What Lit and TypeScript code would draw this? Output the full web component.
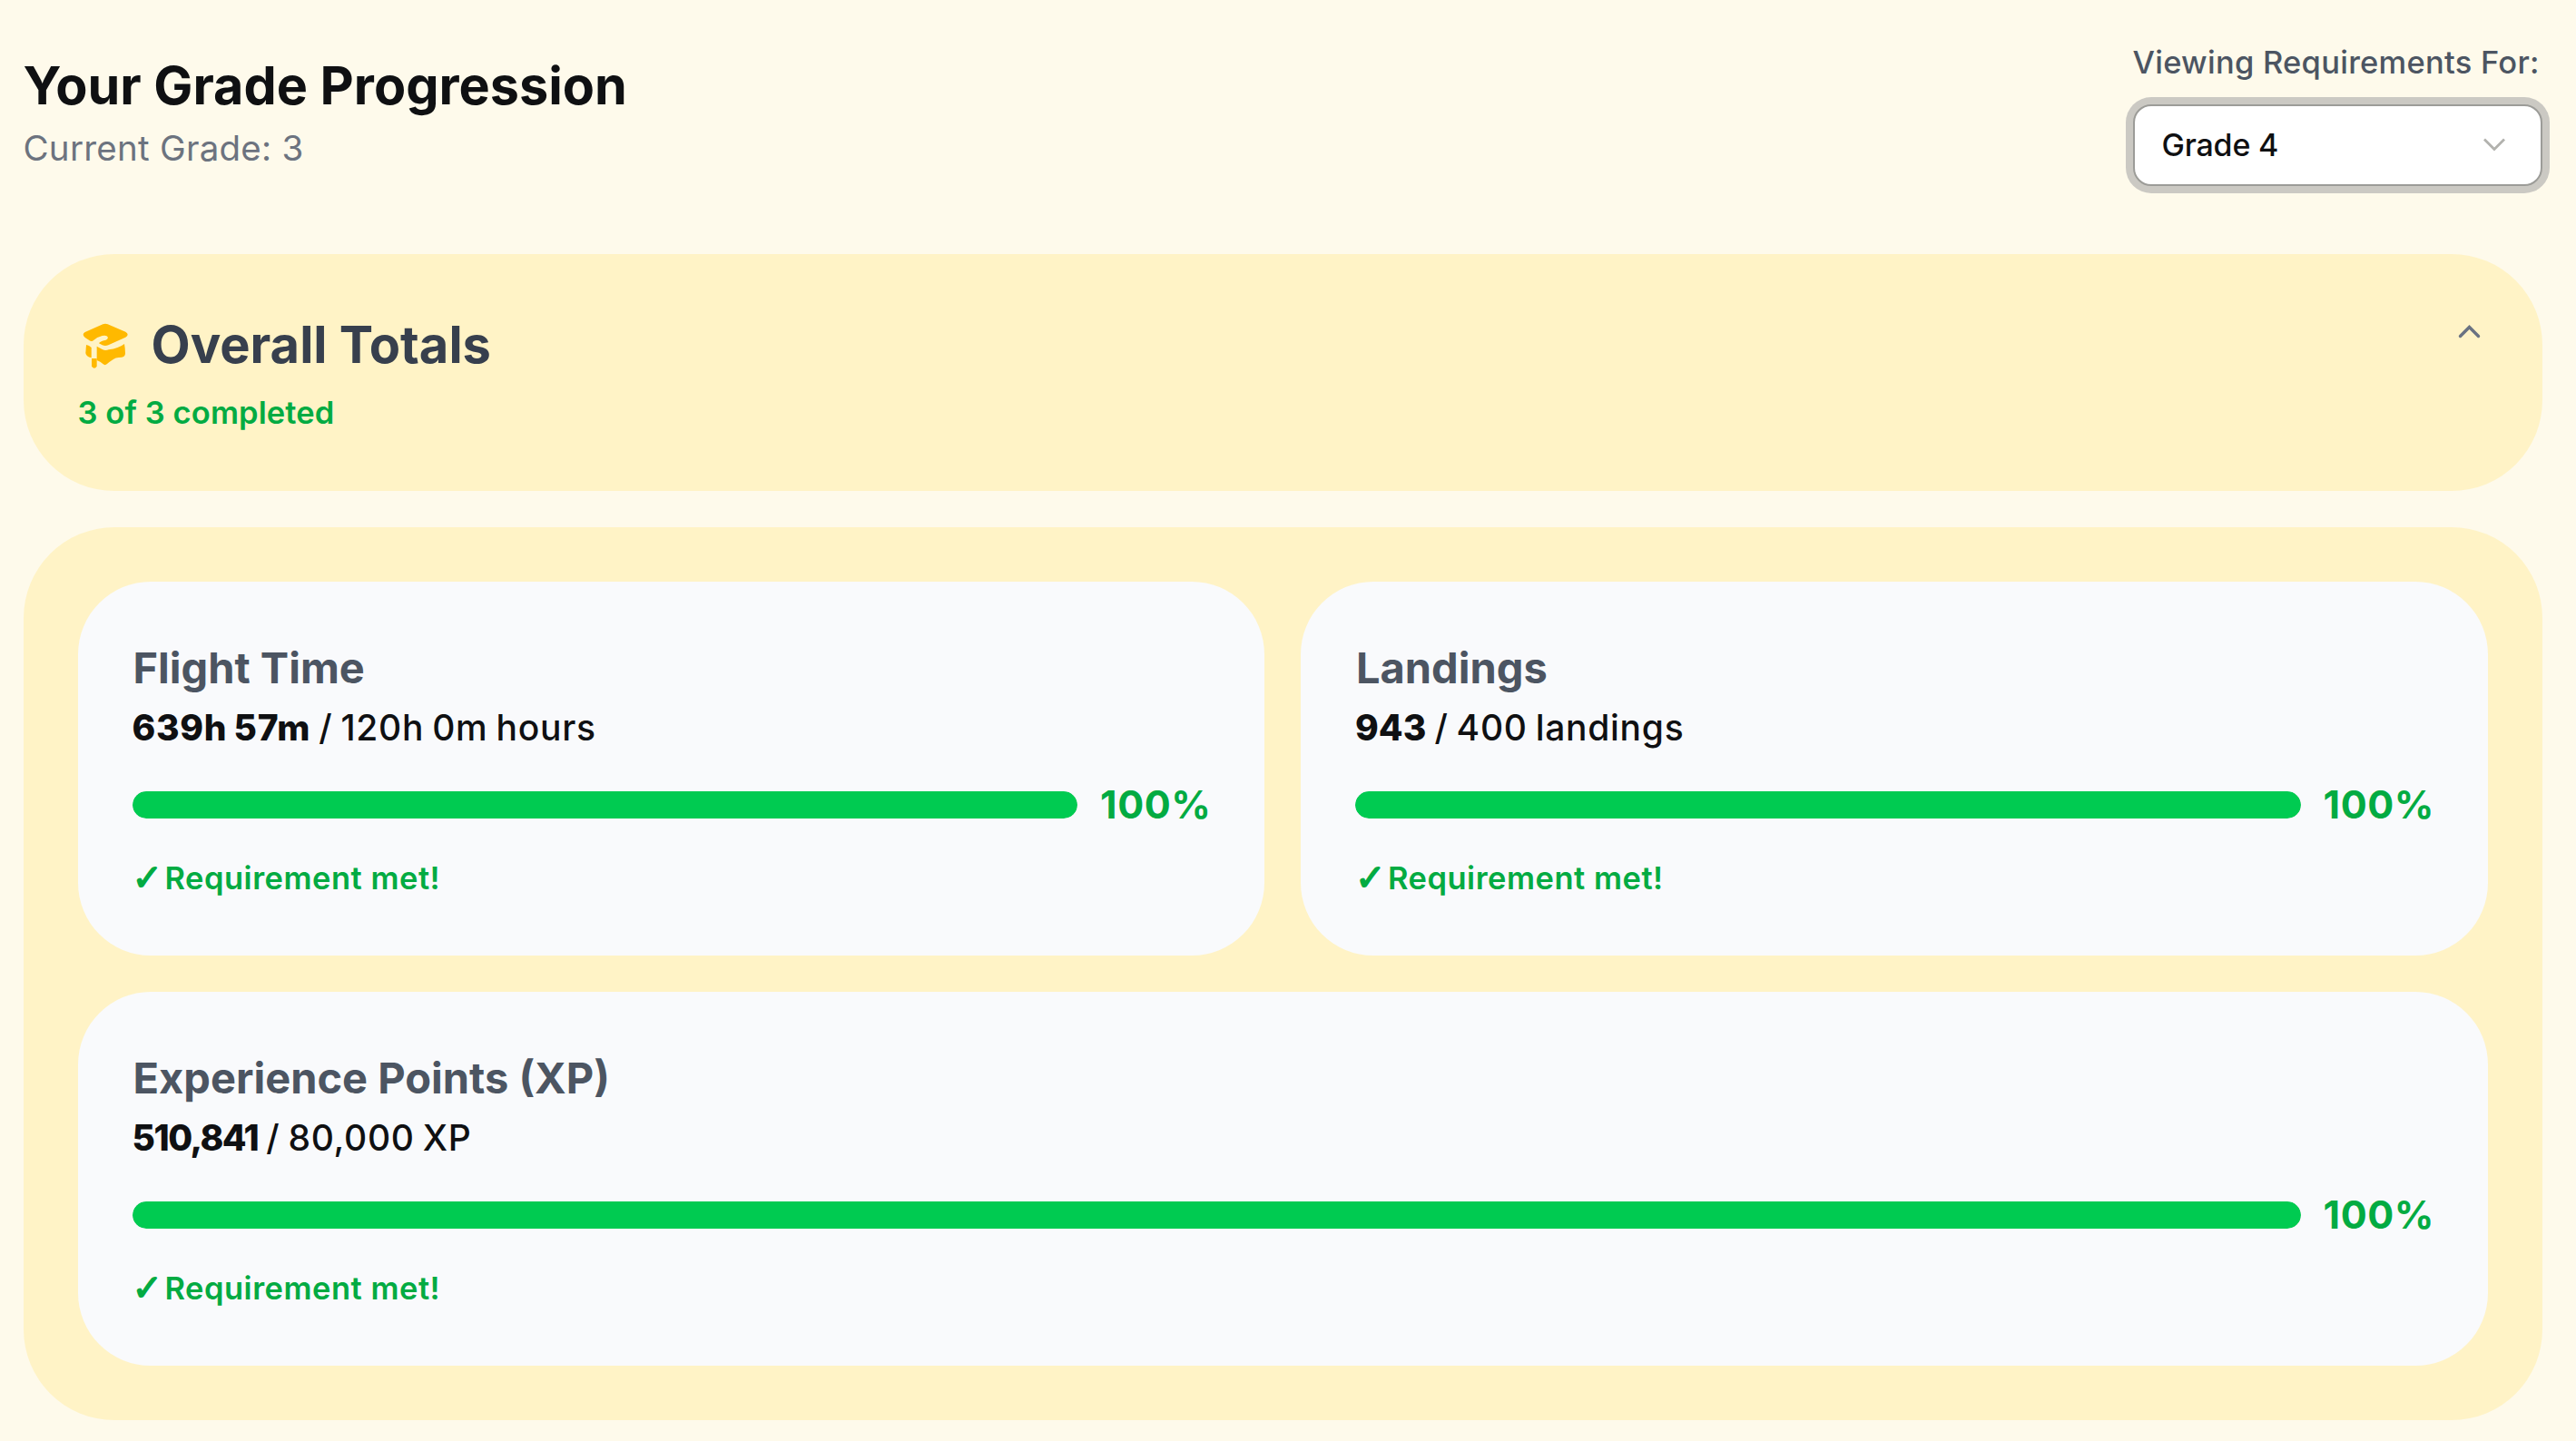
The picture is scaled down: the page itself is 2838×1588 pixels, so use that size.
import { html, css, svg, LitElement } from 'lit';
import { customElement, property, state } from 'lit/decorators.js';

interface Requirement {
	kind: string;
	title: string;
	current: string;
	target: string;
	percent: number;
}

@customElement('requirement-card')
export class RequirementCard extends LitElement {
	static styles = css`
		:host {
			display: block;
			box-sizing: border-box;
			height: 412px;
			padding: 63px 60px 0;
			border-radius: 80px;
			background: #f9fafc;
		}
		.title {
			margin: 0 0 0 1px;
			font-size: 47px;
			line-height: 63px;
			font-weight: 680;
			color: #4c5562;
		}
		.amount {
			font-size: 39px;
			line-height: 50px;
			margin-top: 10px;
			font-weight: 530;
			letter-spacing: 0.7px;
			word-spacing: -2px;
			color: #0f1012;
			white-space: pre;
		}
		.amount b {
			font-weight: 780;
			letter-spacing: 0.7px;
		}
		.amount.landings b {
			letter-spacing: 0;
		}
		.amount.xp b {
			letter-spacing: -1.5px;
		}
		.progress {
			display: flex;
			align-items: center;
			gap: 25px;
			height: 60px;
			margin-top: 30px;
		}
		.track {
			flex: 1;
			height: 30px;
			border-radius: 15px;
			background: #e5e7eb;
			overflow: hidden;
		}
		.fill {
			height: 100%;
			border-radius: 15px;
			background: #00cb51;
		}
		.percent {
			width: 121px;
			font-size: 43px;
			line-height: 58px;
			margin-bottom: 2px;
			font-weight: 650;
			letter-spacing: 0.6px;
			color: #03ab42;
			white-space: nowrap;
		}
		.met {
			display: flex;
			align-items: center;
			height: 44px;
			margin-top: 28px;
			font-size: 34.5px;
			font-weight: 580;
			letter-spacing: 0.5px;
			color: #03ab42;
			white-space: nowrap;
		}
		.check {
			width: 36px;
			font-family: 'DejaVu Sans', sans-serif;
			font-size: 40px;
			line-height: 44px;
			font-weight: 400;
			letter-spacing: 0;
			-webkit-text-stroke: 1.6px #03ab42;
		}
	`;

	@property({ attribute: false }) item!: Requirement;

	render() {
		const { kind, title, current, target, percent } = this.item;
		return html`
			<h3 class="title">${title}</h3>
			<div class="amount ${kind}"><b>${current}</b> / ${target}</div>
			<div class="progress">
				<div class="track"><div class="fill" style="width: ${percent}%"></div></div>
				<span class="percent">${percent}%</span>
			</div>
			${percent >= 100 ? html`<div class="met"><span class="check">✓</span><span>Requirement met!</span></div>` : ''}
		`;
	}
}

@customElement('app-root')
export class AppRoot extends LitElement {
	static styles = css`
		:host {
			display: block;
			box-sizing: border-box;
			min-height: 1588px;
			padding: 47px 37.5px 0 25.5px;
			background: #fefaeb;
			font-family: Inter, sans-serif;
		}
		.header {
			display: flex;
			justify-content: space-between;
			align-items: flex-start;
			height: 233.4px;
		}
		.heading {
			padding-top: 11px;
		}
		h1 {
			margin: 0;
			font-size: 57.5px;
			line-height: 72px;
			font-weight: 720;
			color: #0f1012;
			white-space: nowrap;
		}
		.subtitle {
			margin-top: 5px;
			font-size: 38.5px;
			line-height: 56px;
			letter-spacing: 0.25px;
			color: #6c737f;
		}
		.picker {
			width: 451px;
		}
		.label {
			font-size: 34.5px;
			line-height: 44px;
			font-weight: 530;
			letter-spacing: 0.25px;
			color: #4c5562;
			white-space: nowrap;
		}
		.select {
			display: flex;
			align-items: center;
			justify-content: space-between;
			box-sizing: border-box;
			width: 451px;
			height: 90px;
			margin-top: 24px;
			padding: 0 31px 2px 30px;
			border: 2px solid #9c9c98;
			border-radius: 20px;
			background: #fff;
			box-shadow: 0 0 0 8px #cbc9c3;
			font: 450 34px Inter, sans-serif;
			letter-spacing: -0.2px;
			color: #0f1012;
		}
		.panel {
			border-radius: 100px;
			background: #fff3c6;
		}
		.summary {
			display: flex;
			justify-content: space-between;
			box-sizing: border-box;
			height: 261px;
			padding: 60px 60px 0;
		}
		.name {
			display: flex;
			align-items: center;
			gap: 21px;
			height: 80px;
		}
		.name svg {
			margin-top: 1px;
		}
		h2 {
			margin: 0;
			font-size: 56px;
			line-height: 80px;
			font-weight: 680;
			color: #373f4d;
		}
		.done {
			margin-top: 15px;
			font-size: 34.5px;
			line-height: 40px;
			font-weight: 600;
			letter-spacing: 0.1px;
			color: #03ab42;
		}
		.toggle {
			margin-top: 4.5px;
		}
		.grid {
			display: grid;
			grid-template-columns: 1fr 1fr;
			gap: 40px;
			margin-top: 40px;
			padding: 60px;
		}
		.wide {
			grid-column: span 2;
		}
		svg {
			display: block;
		}
	`;

	@property({ type: Number }) currentGrade = 3;
	@state() private grade = 4;
	@state() private open = true;

	private requirements: Requirement[] = [
		{ kind: 'time', title: 'Flight Time', current: '639h 57m', target: '120h 0m hours', percent: 100 },
		{ kind: 'landings', title: 'Landings', current: '943', target: '400 landings', percent: 100 },
		{ kind: 'xp', title: 'Experience Points (XP)', current: '510,841', target: '80,000 XP', percent: 100 },
	];

	// Graduation cap: board, left band, tassel and right band
	private capIcon = svg`
		<path d="M100 49 Q108 45 116 49 L175 74 Q189 83 175 92 L118 118 Q108 122 98 118 L87 112 Q88 106 110 101 Q118 98 116 91 Q113 84 98 87 Q80 91 66 104 Q60 106 55 102 L41 93 Q29 83 41 75 Z"/>
		<path d="M45 117 Q55 119 62 126 V160 Q44 156 43 144 Z"/>
		<path d="M63 162 H80 V188 Q72 200 63 188 Z"/>
		<path d="M80 122 L98 132 Q108 137 119 133 Q152 129 171 114 Q174 130 174 146 Q173 156 162 158 Q140 158 130 168 Q119 175 113 181 Q107 186 101 181 Q92 172 80 168 Z"/>
	`;

	private toggle() {
		this.open = !this.open;
	}

	render() {
		return html`
			<div class="header">
				<div class="heading">
					<h1>Your Grade Progression</h1>
					<div class="subtitle">Current Grade: ${this.currentGrade}</div>
				</div>
				<div class="picker">
					<div class="label">Viewing Requirements For:</div>
					<div class="select">
						<span>Grade ${this.grade}</span>
						<svg width="40" height="40" viewBox="0 0 40 40" fill="none" stroke="#b2b2ae" stroke-width="2.8">
							<path d="M9 14.5 L20 25.5 L31 14.5"/>
						</svg>
					</div>
				</div>
			</div>
			<div class="panel summary" @click=${this.toggle}>
				<div>
					<div class="name">
						<svg width="60" height="60" viewBox="18 30 180 180" fill="#ffb900">${this.capIcon}</svg>
						<h2>Overall Totals</h2>
					</div>
					<div class="done">3 of 3 completed</div>
				</div>
				<svg class="toggle" width="40" height="40" viewBox="0 0 40 40" fill="none" stroke="#6a7282" stroke-width="3.4" stroke-linecap="round">
					<path d="M9.5 25.5 L19.5 15.5 L29.5 25.5"/>
				</svg>
			</div>
			${this.open ? html`
				<div class="panel grid">
					${this.requirements.map((item, index) => html`
						<requirement-card class="${index === 2 ? 'wide' : ''}" .item=${item}></requirement-card>
					`)}
				</div>
			` : ''}
		`;
	}
}
